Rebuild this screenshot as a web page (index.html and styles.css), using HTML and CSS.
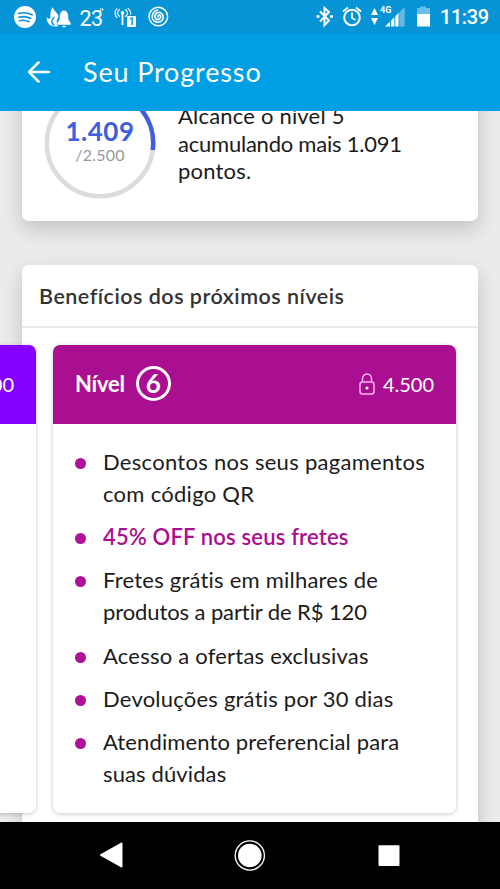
FILE: index.html
```html
<!DOCTYPE html>
<html lang="pt-BR">
<head>
<meta charset="utf-8">
<title>Seu Progresso</title>
<link rel="stylesheet" href="styles.css">
</head>
<body>
<div class="phone">
  <div class="status">
    <svg class="status-icons" width="170" height="33" viewBox="0 0 170 33" fill="none" stroke="#fff" stroke-linecap="round">
      <circle cx="25" cy="17" r="11" fill="#fff" stroke="none"/>
      <path d="M18.500 13.500q7-2 13.500 1.300M19 17.200q6-1.600 11.500 1.200M19.500 20.700q5-1.300 9.500 1" stroke="#0794d6" stroke-width="1.700"/>
      <path d="M53 7c0 4 5 5 5.500 10l-2 4 2 5c-7 2-12-2-12-9 1.500 2 3 2.500 4 .5-.5-4 0-8 2.500-10.500z" fill="#fff" stroke="none"/>
      <path d="M54 17.500c-3 3-3 5 0 7.500" stroke="#0794d6" stroke-width="1.500"/>
      <path d="M64 10c4 1 4.500 4 4.500 9l2.500 4.500v1.500H57v-1.500l2.500-4.500c0-5 .5-8 4.500-9z" fill="#fff" stroke="#0794d6" stroke-width=".5"/>
      <path d="M63 26.500h2" stroke-width="1.500"/>
      <text class="temp" x="79.500" y="26">23</text><circle cx="101.500" cy="9.500" r="1.300" stroke-width=".8"/>
      <path d="M119.500 9.500q-4 3.500 0 7M125.500 9.500q4 3.500 0 7M117 8.500q-4 4.500 0 9M128 8.500q3.500 3 2.500 6" stroke-width="1.100"/>
      <circle cx="122.500" cy="12.800" r="1.800" fill="#fff" stroke="none"/>
      <path d="M122.500 13v12" stroke-width="1.800" stroke-linecap="butt"/>
      <rect x="127" y="16" width="9" height="11" rx="1" fill="#fff" stroke="none"/>
      <text class="sim" x="128.700" y="25">1</text>
      <circle cx="158.300" cy="16.500" r="9.300" stroke-width="1.500"/>
      <path d="M158 17a1.500 1.500 0 0 1 2.500-1.500a3 3 0 0 1-4.500 3.500a4 4 0 0 1 4-6.500a5 5 0 0 1 2 8a6 6 0 0 1-9.500-1.500a7 7 0 0 1 5-9" stroke-width="1.600"/>
    </svg>
    <svg class="status-icons" width="190" height="33" viewBox="310 0 190 33" fill="none" stroke="#fff">
      <path d="M320 11.500l9 9-4.500 4.500V8l4.500 4-9 9.500" stroke-width="2"/>
      <path d="M316.500 16.500h3M330 16.500h3" stroke-width="2.600"/>
      <circle cx="352" cy="17.500" r="7.800" stroke-width="2"/>
      <path d="M352 12.500v5.500l3.500 2M343 11.500l5-4M356 7.500l5 4" stroke-width="1.800"/>
      <path d="M374.500 8l3.500 7h-7zM371 18h7l-3.500 7z" fill="#fff" stroke="none"/>
      <text class="net" x="380" y="13">4G</text>
      <path d="M385 26.500l5-5v5zM391 20.500l3.300-3.300v9.300H391zM395.300 16.300l3-3v13.200h-3z" fill="#fff" stroke="none"/>
      <path d="M399.300 12.300v14.200h-.9V13.200z" fill="#b9e0f5" stroke="none"/>
      <path d="M399.800 11.800L404.700 7v19.500h-4.900z" fill="#62b9e6" stroke="none"/>
      <path d="M417 8h3V6.500h6V8h4v6h-13z" fill="#6bbee9" stroke="none"/>
      <path d="M417 14h13v12.500h-13z" fill="#fff" stroke="none"/>
      <text class="clock" x="440" y="24" textLength="49">11:39</text>
    </svg>
  </div>
  <header class="appbar">
    <svg class="back" width="24" height="24" viewBox="0 0 24 24" fill="none" stroke="#fff" stroke-width="2.500" stroke-linecap="round" stroke-linejoin="round"><path d="M22 12H2M11.500 2.500L2 12l9.500 9.500"/></svg>
    <h1>Seu Progresso</h1>
  </header>
  <main>
    <section class="card summary">
      <div class="ring">
        <svg class="ring-art" viewBox="0 0 112 112" fill="none" stroke-width="4.500">
          <circle cx="56" cy="56" r="53.200" stroke="#dcdcdc"/>
          <path d="M56 2.800A53.200 53.200 0 0 1 108.700 63" stroke="#405fe0"/>
        </svg>
        <strong>1.409</strong>
        <small>/2.500</small>
      </div>
      <p class="goal">Alcance o nível 5<br><span class="tight">acumulando mais 1.091</span><br>pontos.</p>
    </section>
    <section class="card benefits">
      <h2>Benefícios dos próximos níveis</h2>
      <div class="carousel">
        <article class="level previous"><div class="level-head"><span class="points">3.000</span></div></article>
        <article class="level current">
          <div class="level-head">
            <span class="name">Nível</span><span class="num">6</span>
            <svg class="lock" width="18" height="24" viewBox="0 0 18 24" fill="none" stroke="#f6b5ee" stroke-width="1.500"><rect x="2" y="10" width="14" height="12" rx="2.500"/><path d="M4.500 10V6.500a4.500 4.500 0 0 1 9 0V10"/><circle cx="9" cy="16" r="1.500" fill="#fff" stroke="none"/></svg>
            <span class="points">4.500</span>
          </div>
          <ul>
            <li>Descontos nos seus pagamentos<br>com código QR</li>
            <li class="highlight">45% OFF nos seus fretes</li>
            <li>Fretes grátis em milhares de<br><span class="price">produtos a partir de R$ 120</span></li>
            <li>Acesso a ofertas exclusivas</li>
            <li>Devoluções grátis por 30 dias</li>
            <li class="snug">Atendimento preferencial para<br>suas dúvidas</li>
          </ul>
        </article>
      </div>
    </section>
  </main>
  <nav>
    <svg width="500" height="67" viewBox="0 0 500 67">
      <path d="M101 33L121.500 21.500v23z" fill="#fff" stroke="#fff" stroke-width="2" stroke-linejoin="round"/>
      <circle cx="249.800" cy="33.500" r="14.600" fill="none" stroke="#fff" stroke-width="1.300"/><circle cx="249.800" cy="33.500" r="11.800" fill="#fff"/>
      <rect x="378.500" y="23.300" width="21" height="20.700" rx="1" fill="#fff"/>
    </svg>
  </nav>
</div>
</body>
</html>
```
FILE: styles.css
```css
* { box-sizing: border-box; }
body { margin: 0; font-family: Lato, "Open Sans", sans-serif; color: #1b1b1b; font-variant-ligatures: none; }
.phone { width: 500px; height: 889px; display: flex; flex-direction: column; overflow: hidden; background: #ebebeb; }
h1, h2, p, ul { margin: 0; padding: 0; font-weight: 400; }
svg { display: block; flex: none; }

.status { height: 33px; flex: none; display: flex; justify-content: space-between; background: #0794d6; }
.status text { fill: #fff; stroke: none; font-family: Roboto, sans-serif; }
.status .temp { font-size: 21.500px; font-weight: 400; letter-spacing: -0.7px; }
.status .sim { font-size: 10px; font-weight: 700; fill: #0794d6; }
.net { font-size: 9px; font-weight: 700; }
.clock { font-size: 20px; font-weight: 500; }

.appbar { height: 78px; flex: none; display: flex; align-items: center; padding-left: 27px; background: #009ee3; color: #fff; }
.appbar h1 { margin-left: 32px; font-size: 27px; letter-spacing: 0.85px; line-height: 34px; }

main { flex: 1; min-height: 0; overflow: hidden; padding: 0 22px; }
.card { background: #fff; border-radius: 7px; box-shadow: 0 8px 20px rgba(0, 0, 0, 0.18); }
.summary { height: 170px; margin-top: -60px; padding: 36px 0 0 22px; display: flex; align-items: flex-start; }
.ring { width: 112px; height: 112px; display: grid; grid-template-rows: 56px 22px; align-items: end; justify-items: center; }
.ring-art { grid-area: 1 / 1 / 3 / 2; align-self: start; width: 112px; height: 112px; }
.ring strong { grid-area: 1 / 1; color: #405fe0; font-size: 26px; line-height: 24px; letter-spacing: 0.5px; }
.ring small { grid-area: 2 / 1; color: #999; font-size: 16px; line-height: 20px; letter-spacing: 0.2px; }
.goal { margin: 15px 0 0 22px; font-size: 22px; line-height: 27.700px; letter-spacing: 0.2px; }
.tight { letter-spacing: -0.23px; }
.price { letter-spacing: -0.1px; }

.benefits { height: 620px; margin-top: 44px; }
.benefits h2 { height: 63px; padding-left: 17px; border-bottom: 2px solid #e9e9e9; font-size: 21.500px; font-weight: 600; line-height: 63px; letter-spacing: 0.5px; color: #333; white-space: nowrap; }
.carousel { display: flex; gap: 17px; margin: 17px 0 0 -389px; }
.level { flex: none; width: 403px; height: 468px; border-radius: 7px; background: #fff; box-shadow: 0 1px 4px rgba(0, 0, 0, 0.22); overflow: hidden; }
.level-head { height: 79px; display: flex; align-items: center; padding: 0 22px 2px; color: #fff; background: #a90f90; }
.previous .level-head { background: #8500ff; justify-content: flex-end; }
.name { font-size: 22px; font-weight: 700; letter-spacing: -0.2px; }
.num { width: 35px; height: 35px; margin-left: 11px; border: 3px solid #fff; border-radius: 50%; font-size: 26px; font-weight: 700; line-height: 28px; text-align: center; }
.lock { margin: 0 7px 0 auto; }
.points { font-size: 20px; letter-spacing: 0; }
.level ul { list-style: none; padding: 22px 0 0 22px; display: grid; gap: 11.200px; }
.level li { position: relative; padding-left: 28px; font-size: 22px; line-height: 32px; letter-spacing: 0.28px; white-space: nowrap; }
.level li::before { content: ""; position: absolute; left: 0; top: 12px; width: 11px; height: 11px; border-radius: 50%; background: #b00f98; }
.level li:nth-child(n + 3) { letter-spacing: 0.22px; }
.level li.snug { letter-spacing: 0.12px; }
.level .highlight { color: #a90f90; font-weight: 600; letter-spacing: 0.18px; }

nav { height: 67px; flex: none; background: #000; }
```
